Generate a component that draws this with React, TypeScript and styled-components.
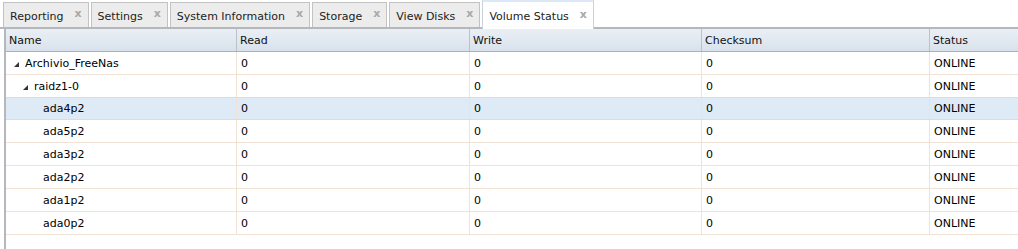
import React from 'react';
import styled, { createGlobalStyle } from 'styled-components';

const GlobalStyle = createGlobalStyle`
  html, body {
    margin: 0;
    padding: 0;
    background: #ffffff;
  }
  body {
    font-family: "DejaVu Sans", Verdana, sans-serif;
    font-size: 11px;
    color: #000;
  }
`;

type Row = {
  name: string;
  level: number;
  expandable?: boolean;
  selected?: boolean;
};

const tabs = ['Reporting', 'Settings', 'System Information', 'Storage', 'View Disks', 'Volume Status'];

const rows: Row[] = [
  { name: 'Archivio_FreeNas', level: 0, expandable: true },
  { name: 'raidz1-0', level: 1, expandable: true },
  { name: 'ada4p2', level: 2, selected: true },
  { name: 'ada5p2', level: 2 },
  { name: 'ada3p2', level: 2 },
  { name: 'ada2p2', level: 2 },
  { name: 'ada1p2', level: 2 },
  { name: 'ada0p2', level: 2 },
];

const columns = '231px 233px 232px 228px 1fr';

const Page = styled.div`
  width: 1018px;
  height: 249px;
  display: flex;
  flex-direction: column;
  overflow: hidden;
`;

const TabBar = styled.div`
  display: flex;
  align-items: flex-end;
  gap: 2px;
  height: 29px;
  padding-left: 3px;
  border-bottom: 2px solid #b4b8bd;
  box-sizing: border-box;
`;

const Tab = styled.div<{ active?: boolean }>`
  display: flex;
  align-items: center;
  gap: 11px;
  box-sizing: border-box;
  height: ${p => (p.active ? '30px' : '25px')};
  margin-bottom: ${p => (p.active ? '-2px' : '0')};
  padding: 2px 6px 0 6px;
  border: 1px solid ${p => (p.active ? '#c9d3de' : '#c2c2c2')};
  border-bottom: none;
  border-top: ${p => (p.active ? '3px solid #dde8f6' : '1px solid #c2c2c2')};
  background: ${p => (p.active ? '#ffffff' : '#ececec')};
  color: #222;
  white-space: nowrap;
  position: relative;
  z-index: ${p => (p.active ? 1 : 0)};
`;

const TabClose = styled.span`
  font-family: "DejaVu Sans", sans-serif;
  font-weight: bold;
  font-size: 11px;
  color: #a8a8a8;
  margin-top: -5px;
`;

const Grid = styled.div`
  flex: 1;
  margin-left: 4px;
  border-left: 2px solid #b4b8bd;
`;

const HeaderRow = styled.div`
  display: grid;
  grid-template-columns: ${columns};
  height: 22px;
  background: linear-gradient(#eaeff5, #d9e2ec);
  border-bottom: 1px solid #a9b0b8;
`;

const HeaderCell = styled.div`
  display: flex;
  align-items: center;
  padding-left: 3px;
  padding-top: 1px;
  border-right: 1px solid #b9c2cc;
  color: #111;
  &:last-child {
    border-right: none;
  }
`;

const BodyRow = styled.div<{ selected?: boolean }>`
  display: grid;
  grid-template-columns: ${columns};
  height: 23px;
  box-sizing: border-box;
  border-bottom: 1px solid ${p => (p.selected ? '#cfdff0' : '#f0e2d4')};
  border-top: ${p => (p.selected ? '1px solid #cfdff0' : 'none')};
  margin-top: ${p => (p.selected ? '-1px' : '0')};
  background: ${p => (p.selected ? '#dfeaf7' : '#ffffff')};
`;

const Cell = styled.div`
  display: flex;
  align-items: center;
  padding-left: 4px;
  border-right: 1px solid #f0e2d4;
  white-space: nowrap;
  &:last-child {
    border-right: none;
  }
`;

const NameCell = styled(Cell)<{ level: number }>`
  padding-left: ${p => 8 + p.level * 9}px;
`;

const Toggle = styled.span`
  display: inline-block;
  width: 0;
  height: 0;
  border-left: 5px solid transparent;
  border-bottom: 5px solid #333;
  margin-right: 6px;
  margin-top: 2px;
`;

const Spacer = styled.span`
  display: inline-block;
  width: 11px;
`;

export default function App() {
  return (
    <Page>
      <GlobalStyle />
      <TabBar>
        {tabs.map(t => (
          <Tab key={t} active={t === 'Volume Status'}>
            <span>{t}</span>
            <TabClose>x</TabClose>
          </Tab>
        ))}
      </TabBar>
      <Grid>
        <HeaderRow>
          <HeaderCell>Name</HeaderCell>
          <HeaderCell>Read</HeaderCell>
          <HeaderCell>Write</HeaderCell>
          <HeaderCell>Checksum</HeaderCell>
          <HeaderCell>Status</HeaderCell>
        </HeaderRow>
        {rows.map(r => (
          <BodyRow key={r.name} selected={r.selected}>
            <NameCell level={r.level}>
              {r.expandable ? <Toggle /> : <Spacer />}
              {r.name}
            </NameCell>
            <Cell>0</Cell>
            <Cell>0</Cell>
            <Cell>0</Cell>
            <Cell>ONLINE</Cell>
          </BodyRow>
        ))}
      </Grid>
    </Page>
  );
}
